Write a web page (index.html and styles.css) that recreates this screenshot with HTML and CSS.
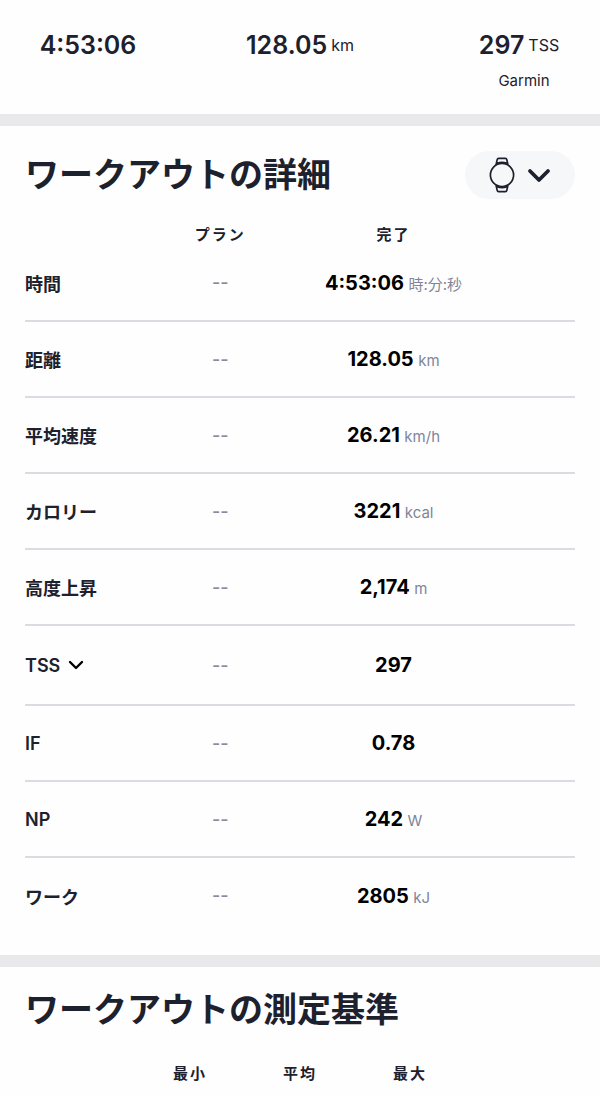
FILE: index.html
```html
<!DOCTYPE html>
<html lang="ja">
<head>
  <meta charset="UTF-8">
  <meta name="viewport" content="width=device-width, initial-scale=1.0">
  <title>ワークアウトの詳細</title>
  <link rel="stylesheet" href="styles.css">
</head>
<body>

<header class="summary">
  <div class="summary-item">
    <div class="total"><strong>4:53:06</strong></div>
  </div>
  <div class="summary-item">
    <div class="total"><strong>128.05</strong> <span>km</span></div>
  </div>
  <div class="summary-item">
    <div class="total"><strong>297</strong> <span>TSS</span></div>
    <p class="source">Garmin</p>
  </div>
</header>

<main>
  <section class="panel">
    <div class="panel-header">
      <h2>ワークアウトの詳細</h2>
      <button class="device-button" aria-label="デバイス">
        <svg width="26" height="36" viewBox="0 0 26 36" fill="none" stroke="currentColor" stroke-width="1.7" stroke-linejoin="round">
          <circle cx="13" cy="18" r="11.6"/>
          <path d="M7 8 8.2 2.6Q8.4 1.4 9.6 1.4h6.8q1.2 0 1.4 1.2L19 8M8 6.2q5-1.6 10 0"/>
          <path d="M7 28l1.2 5.4q.2 1.2 1.4 1.2h6.8q1.2 0 1.4-1.2L19 28M8 29.8q5 1.6 10 0"/>
        </svg>
        <svg width="24" height="16" viewBox="0 0 24 16" fill="none" stroke="currentColor" stroke-width="3.8" stroke-linecap="round" stroke-linejoin="round">
          <path d="M3 4l9 9 9-9"/>
        </svg>
      </button>
    </div>

    <table class="details">
      <thead>
        <tr><th></th><th scope="col">プラン</th><th scope="col">完了</th><th></th></tr>
      </thead>
      <tbody>
        <tr><th scope="row">時間</th><td class="plan">--</td><td><b>4:53:06</b> <small>時:分:秒</small></td><td></td></tr>
        <tr><th scope="row">距離</th><td class="plan">--</td><td><b>128.05</b> <small>km</small></td><td></td></tr>
        <tr><th scope="row">平均速度</th><td class="plan">--</td><td><b>26.21</b> <small>km/h</small></td><td></td></tr>
        <tr><th scope="row">カロリー</th><td class="plan">--</td><td><b>3221</b> <small>kcal</small></td><td></td></tr>
        <tr><th scope="row">高度上昇</th><td class="plan">--</td><td><b>2,174</b> <small>m</small></td><td></td></tr>
        <tr class="tall">
          <th scope="row">
            <button class="score-button">TSS
              <svg width="16" height="12" viewBox="0 0 16 12" fill="none" stroke="#000" stroke-width="2.4" stroke-linecap="round" stroke-linejoin="round">
                <path d="M2 3l6 6 6-6"/>
              </svg>
            </button>
          </th>
          <td class="plan">--</td><td><b>297</b></td><td></td>
        </tr>
        <tr><th scope="row">IF</th><td class="plan">--</td><td><b>0.78</b></td><td></td></tr>
        <tr><th scope="row">NP</th><td class="plan">--</td><td><b>242</b> <small>W</small></td><td></td></tr>
        <tr><th scope="row">ワーク</th><td class="plan">--</td><td><b>2805</b> <small>kJ</small></td><td></td></tr>
      </tbody>
    </table>
  </section>

  <section class="panel metrics-panel">
    <h2>ワークアウトの測定基準</h2>
    <table class="metrics">
      <thead>
        <tr><th></th><th scope="col">最小</th><th scope="col">平均</th><th scope="col">最大</th><th></th></tr>
      </thead>
    </table>
  </section>
</main>

</body>
</html>
```
FILE: styles.css
```css
* {
  box-sizing: border-box;
}

body {
  margin: 0;
  background-color: #fefefe;
  color: #1d212d;
  font-family: Inter, "Noto Sans CJK JP", sans-serif;
}

button {
  border: none;
  background: none;
  padding: 0;
  color: inherit;
  font: inherit;
  cursor: pointer;
}

svg {
  display: block;
}

/* Summary */
.summary {
  display: grid;
  grid-template-columns: 29% 42% 29%;
  padding: 30px 0 20px;
  text-align: center;
  font-size: 16px;
  line-height: 30px;
  white-space: nowrap;
}

.total {
  display: flex;
  justify-content: center;
  align-items: center;
  gap: 4px;
}

.summary strong {
  font-size: 25px;
  font-weight: 600;
}

.summary-item:first-child {
  padding-left: 2px;
}

.summary-item:last-child {
  padding-left: 12px;
}

.source {
  margin: 8px 0 0;
  padding-left: 10px;
  font-size: 15px;
  line-height: 26px;
}

/* Panels */
.panel {
  border-top: 12px solid #e9e9eb;
  padding: 25px 25px 22px;
}

.panel-header {
  display: flex;
  justify-content: space-between;
  align-items: center;
}

h2 {
  margin: 0;
  font-size: 34px;
  font-weight: 600;
  line-height: 36px;
}

.device-button {
  display: flex;
  justify-content: center;
  align-items: center;
  gap: 12px;
  width: 110px;
  height: 48px;
  border-radius: 24px;
  background-color: #f6f7f9;
}

/* Tables */
table {
  width: 100%;
  table-layout: fixed;
  border-collapse: collapse;
}

th, td {
  padding: 0;
  text-align: center;
  white-space: nowrap;
}

thead th {
  padding-top: 26px;
  font-size: 15px;
  font-weight: 600;
  line-height: 20px;
  letter-spacing: 2px;
}

.details thead th:nth-child(1) {
  width: 20%;
}

.details thead th:nth-child(2) {
  width: 31%;
}

.details thead th:nth-child(3) {
  width: 32%;
}

.details tbody tr {
  height: 76px;
  border-bottom: 2px solid #dadce1;
}

.details tbody tr.tall {
  height: 80px;
}

.details tbody tr:last-child {
  border-bottom: none;
}

.details tbody th {
  text-align: left;
  font-size: 18px;
  font-weight: 600;
}

.score-button {
  display: flex;
  align-items: center;
  gap: 8px;
}

.plan {
  color: #888c9b;
  font-size: 18px;
  font-weight: 500;
}

.details b {
  color: #000;
  font-size: 20px;
  font-weight: 700;
}

.details small {
  color: #80859a;
  font-size: 15px;
}

.metrics thead th {
  padding-top: 36px;
}
```
